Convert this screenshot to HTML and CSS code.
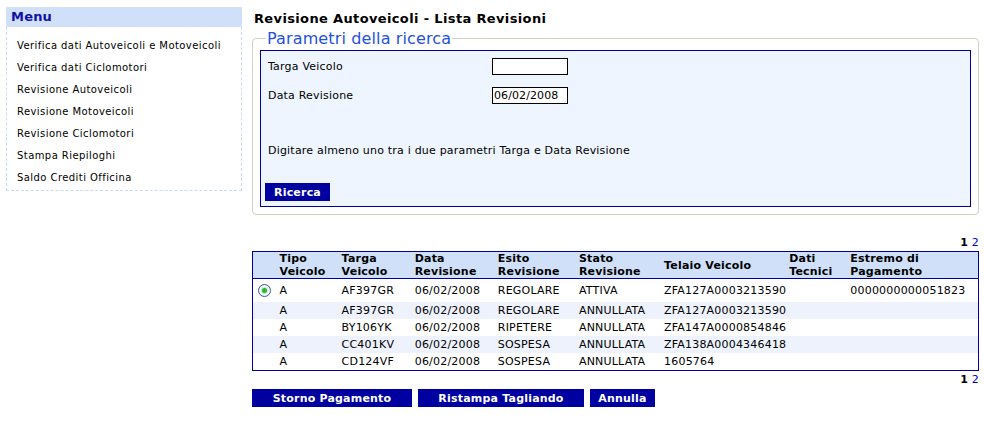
FILE: index.html
```html
<!DOCTYPE html>
<html lang="it">
<head>
<meta charset="utf-8">
<title>Revisione Autoveicoli - Lista Revisioni</title>
<link rel="stylesheet" href="styles.css">
</head>
<body>
<div class="page">
  <aside class="sidebar">
    <div class="menu-head">Menu</div>
    <ul class="menu">
      <li>Verifica dati Autoveicoli e Motoveicoli</li>
      <li>Verifica dati Ciclomotori</li>
      <li>Revisione Autoveicoli</li>
      <li>Revisione Motoveicoli</li>
      <li>Revisione Ciclomotori</li>
      <li>Stampa Riepiloghi</li>
      <li>Saldo Crediti Officina</li>
    </ul>
  </aside>
  <main class="main">
    <h1 class="title">Revisione Autoveicoli - Lista Revisioni</h1>
    <fieldset class="search">
      <legend class="search-legend">Parametri della ricerca</legend>
      <div class="panel">
        <div class="field-row">
          <span class="field-label">Targa Veicolo</span>
          <input class="field-input" type="text" value="">
        </div>
        <div class="field-row">
          <span class="field-label">Data Revisione</span>
          <input class="field-input" type="text" value="06/02/2008">
        </div>
        <p class="hint">Digitare almeno uno tra i due parametri Targa e Data Revisione</p>
        <button class="btn btn-search" type="button">Ricerca</button>
      </div>
    </fieldset>

    <div class="pager"><span class="pager-cur">1</span> <span class="pager-link">2</span></div>
    <table class="grid">
      <colgroup>
        <col class="c-sel"><col class="c-tipo"><col class="c-targa"><col class="c-data"><col class="c-esito"><col class="c-stato"><col class="c-telaio"><col class="c-dati"><col class="c-estremo">
      </colgroup>
      <thead>
        <tr>
          <th></th>
          <th>Tipo<br>Veicolo</th>
          <th>Targa<br>Veicolo</th>
          <th>Data<br>Revisione</th>
          <th>Esito<br>Revisione</th>
          <th>Stato<br>Revisione</th>
          <th>Telaio Veicolo</th>
          <th>Dati<br>Tecnici</th>
          <th>Estremo di<br>Pagamento</th>
        </tr>
      </thead>
      <tbody>
        <tr class="row-first">
          <td class="sel"><span class="radio"></span></td>
          <td>A</td><td>AF397GR</td><td>06/02/2008</td><td>REGOLARE</td><td>ATTIVA</td><td>ZFA127A0003213590</td><td></td><td>0000000000051823</td>
        </tr>
        <tr class="row-alt">
          <td></td>
          <td>A</td><td>AF397GR</td><td>06/02/2008</td><td>REGOLARE</td><td>ANNULLATA</td><td>ZFA127A0003213590</td><td></td><td></td>
        </tr>
        <tr>
          <td></td>
          <td>A</td><td>BY106YK</td><td>06/02/2008</td><td>RIPETERE</td><td>ANNULLATA</td><td>ZFA147A0000854846</td><td></td><td></td>
        </tr>
        <tr class="row-alt">
          <td></td>
          <td>A</td><td>CC401KV</td><td>06/02/2008</td><td>SOSPESA</td><td>ANNULLATA</td><td>ZFA138A0004346418</td><td></td><td></td>
        </tr>
        <tr>
          <td></td>
          <td>A</td><td>CD124VF</td><td>06/02/2008</td><td>SOSPESA</td><td>ANNULLATA</td><td>1605764</td><td></td><td></td>
        </tr>
      </tbody>
    </table>
    <div class="pager pager-bottom"><span class="pager-cur">1</span> <span class="pager-link">2</span></div>

    <div class="actions">
      <button class="btn btn-storno" type="button">Storno Pagamento</button>
      <button class="btn btn-ristampa" type="button">Ristampa Tagliando</button>
      <button class="btn btn-annulla" type="button">Annulla</button>
    </div>
  </main>
</div>
</body>
</html>
```
FILE: styles.css
```css
html, body {
  margin: 0;
  padding: 0;
  background: #ffffff;
}
body {
  font-family: "DejaVu Sans", Verdana, sans-serif;
  font-size: 11px;
  color: #000000;
  letter-spacing: 0.2px;
}
.page {
  display: flex;
  align-items: flex-start;
  padding-top: 7px;
}

/* Sidebar */
.sidebar {
  width: 236px;
  margin-left: 6px;
  box-sizing: border-box;
  border: 1px dashed #c9d9f1;
  border-top: none;
}
.menu-head {
  height: 20px;
  line-height: 20px;
  margin: 0 -1px;
  padding-left: 5px;
  background: #d0e0f8;
  color: #1111aa;
  font-weight: bold;
  font-size: 13px;
}
.menu {
  list-style: none;
  margin: 0;
  padding: 8px 0 1px 10px;
}
.menu li {
  line-height: 22px;
  font-size: 10px;
  letter-spacing: 0.43px;
}

/* Main */
.main {
  width: 727px;
  margin-left: 10px;
}
.title {
  margin: 0;
  padding-left: 2px;
  padding-top: 1px;
  font-size: 13px;
  font-weight: bold;
  line-height: 21px;
  letter-spacing: 0.36px;
}
.search {
  margin: 0;
  padding: 0 7px 7px 7px;
  border: 1px solid #d2d1bf;
  border-radius: 4px;
  min-width: 0;
}
.search-legend {
  margin-left: 6px;
  padding: 0 1px;
  font-size: 16px;
  line-height: 19px;
  letter-spacing: 0.13px;
  color: #2352dc;
}
.panel {
  margin-top: 2px;
  border: 1px solid #0000a0;
  background: #eef5fe;
  padding: 7px 4px 5px 4px;
}
.field-row {
  display: grid;
  grid-template-columns: 227px 76px;
  align-items: center;
  height: 17px;
  margin-bottom: 12px;
}
.field-label {
  padding-left: 3px;
  line-height: 15px;
}
.field-input {
  box-sizing: border-box;
  width: 76px;
  height: 17px;
  margin: 0;
  padding: 0 1px;
  border: 1px solid #000000;
  background: #ffffff;
  font-family: "DejaVu Sans", Verdana, sans-serif;
  font-size: 11px;
  letter-spacing: 0.1px;
  color: #000000;
}
.hint {
  margin: 40px 0 0 0;
  padding-left: 3px;
  line-height: 13px;
}
.btn {
  height: 18px;
  margin: 0;
  padding: 0;
  border: none;
  background: #0000a0;
  color: #ffffff;
  font-family: "DejaVu Sans", Verdana, sans-serif;
  font-size: 11px;
  font-weight: bold;
  letter-spacing: 0.2px;
  text-align: center;
}
.btn-search {
  display: block;
  width: 65px;
  margin-top: 26px;
}

/* Pager */
.pager {
  margin-top: 21px;
  text-align: right;
  line-height: 14px;
  font-size: 11px;
}
.pager-cur {
  font-weight: bold;
}
.pager-link {
  color: #0000cc;
}
.pager-bottom {
  margin-top: 2px;
}

/* Grid */
.grid {
  width: 727px;
  border-collapse: collapse;
  table-layout: fixed;
  border: 1px solid #0000a0;
  margin-top: 1px;
}
.c-sel { width: 24px; }
.c-tipo { width: 62px; }
.c-targa { width: 73px; }
.c-data { width: 83px; }
.c-esito { width: 81px; }
.c-stato { width: 85px; }
.c-telaio { width: 125px; }
.c-dati { width: 61px; }
.c-estremo { width: 131px; }
.grid th {
  background: #d0e0f8;
  border-bottom: 1px solid #0000a0;
  text-align: left;
  font-weight: bold;
  line-height: 13px;
  padding: 0 3px;
  vertical-align: middle;
  white-space: nowrap;
}
.grid td {
  padding: 0 3px;
  line-height: 17px;
  height: 17px;
  white-space: nowrap;
  vertical-align: middle;
}
.grid .row-first td {
  height: 23px;
}
.grid .row-alt td {
  background: #eef2fd;
}
.grid td.sel {
  padding: 0;
  text-align: center;
}
.radio {
  display: inline-block;
  box-sizing: border-box;
  width: 13px;
  height: 13px;
  border: 1px solid #3a5f8f;
  border-radius: 50%;
  background: radial-gradient(circle, #2fb53a 0, #2fb53a 2px, #bfe8c0 3px, #ffffff 4px, #e7eaee 6px);
  vertical-align: middle;
  margin-top: -1px;
}

/* Actions */
.actions {
  display: flex;
  gap: 6px;
  margin-top: 2px;
}
.btn-storno { width: 160px; }
.btn-ristampa { width: 166px; }
.btn-annulla { width: 65px; }
```
